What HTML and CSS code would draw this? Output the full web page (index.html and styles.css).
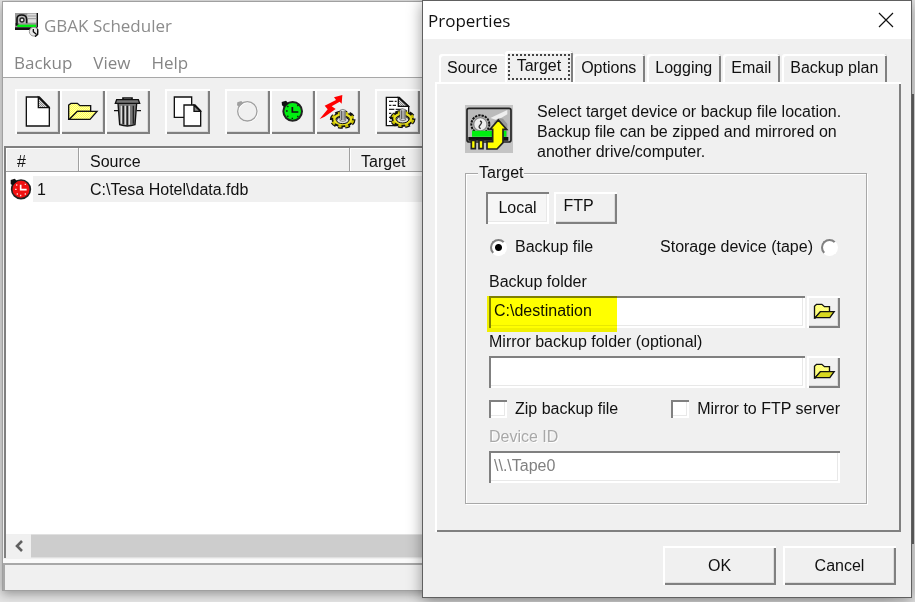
FILE: index.html
```html
<!DOCTYPE html>
<html lang="en">
<head>
<meta charset="utf-8">
<title>GBAK Scheduler</title>
<link rel="stylesheet" href="styles.css">
</head>
<body>
<svg class="defs" aria-hidden="true">
  <defs>
    <pattern id="dither" width="6" height="6" patternUnits="userSpaceOnUse"><rect width="6" height="6" fill="#ffff50"/><path d="M0 0h3v3H0zM3 3h3v3H3z" fill="#ffffa8"/></pattern>
    <pattern id="greyDither" width="6" height="6" patternUnits="userSpaceOnUse"><rect width="6" height="6" fill="#888"/><path d="M0 0h3v3H0zM3 3h3v3H3z" fill="#ddd"/></pattern>
    <symbol id="gear" viewBox="0 0 80 64">
      <ellipse cx="40" cy="36" rx="31" ry="20" fill="none" stroke="#111" stroke-width="15" stroke-dasharray="13 7"/>
      <ellipse cx="40" cy="36" rx="26" ry="16" fill="none" stroke="#111" stroke-width="14"/>
      <ellipse cx="40" cy="36" rx="30" ry="19" fill="none" stroke="#c8c000" stroke-width="10" stroke-dasharray="9 11" stroke-dashoffset="-2"/>
      <ellipse cx="40" cy="35" rx="25" ry="15" fill="none" stroke="#e8e020" stroke-width="7"/>
      <ellipse cx="40" cy="38" rx="18" ry="10" fill="#ddd" stroke="#111" stroke-width="3"/>
      <path d="M32 8q8-5 17 0v31q-8 4-17 0z" fill="#e8e8e8" stroke="#444" stroke-width="2"/>
      <path d="M42 10h5v27h-5z" fill="#888"/>
      <path d="M36 10h3v27h-3z" fill="#222"/>
    </symbol>
    <symbol id="small-folder" viewBox="445 226 96 96">
      <path d="M466 292V257L472 251H488L496 258H511V273H484L468 292Z" fill="url(#dither)" stroke="#111" stroke-width="4"/>
      <path d="M484 273H525L512 291H468Z" fill="#d8d820" stroke="#111" stroke-width="4"/>
    </symbol>
  </defs>
</svg>

<main class="window">
  <header class="window-title">
    <svg class="app-icon" viewBox="45 36 72 72" aria-hidden="true">
      <path d="M45 36h68v50H45z" fill="#999"/><path d="M82 38h28v27H82z" fill="#ddd"/>
      <path d="M84 45h24M84 53h24" stroke="#999" stroke-width="3"/><path d="M110 36h4v42h-4zM47 66h8v8h-8z" fill="#111"/>
      <path d="M51 67V54q0-12 14-12t15 12v13" fill="#bbb" stroke="#111" stroke-width="5"/>
      <circle cx="66" cy="57" r="6" fill="#eee" stroke="#222" stroke-width="4"/>
      <path d="M52 71h56v7H52z" fill="#00ee10"/><path d="M45 79h67v8H45z" fill="#111"/>
      <circle cx="101" cy="92" r="13" fill="#e8e8e8" stroke="#999" stroke-width="3"/><path d="M100 84v8l9 8M113 84v16l-8 7" fill="none" stroke="#111" stroke-width="4"/>
    </svg>
    <h1>GBAK Scheduler</h1>
  </header>
  <nav class="menu">
    <button type="button">Backup</button>
    <button type="button">View</button>
    <button type="button">Help</button>
  </nav>
  <div class="toolbar" role="toolbar" aria-label="Backup tasks">
    <div class="tool-group">
      <button type="button" aria-label="New"><svg viewBox="45 270 135 135"><path d="M79 294H118L148 325V381H79Z" fill="#fff" stroke="#111" stroke-width="4"/><path d="M115 295L147 326H115Z" fill="url(#greyDither)" stroke="#111" stroke-width="4"/></svg></button>
      <button type="button" aria-label="Open"><svg viewBox="180 270 135 135"><path d="M206 361V318L213 313H232L240 320H272V337H232L209 361Z" fill="url(#dither)" stroke="#111" stroke-width="4"/><path d="M232 337H291L270 361H208Z" fill="url(#dither)" stroke="#111" stroke-width="4"/></svg></button>
      <button type="button" aria-label="Delete"><svg viewBox="315 270 135 135"><path d="M369 302V297H396V302" fill="none" stroke="#111" stroke-width="5"/><path d="M354 313H410L405 377Q382 385 359 377Z" fill="#777" stroke="#111" stroke-width="4"/><path d="M364 320v54M376 320v57M388 320v57" stroke="#ddd" stroke-width="4"/><path d="M370 320v56M382 320v58M400 320v54" stroke="#222" stroke-width="4"/><path d="M350 302H415L419 313H346Z" fill="#777" stroke="#111" stroke-width="4"/><path d="M342 335h14M410 335h13" stroke="#111" stroke-width="4"/></svg></button>
    </div>
    <div class="tool-group">
      <button type="button" aria-label="Copy"><svg viewBox="495 270 135 135"><path d="M523 294H575V355H523Z" fill="#fff" stroke="#111" stroke-width="4"/><path d="M552 318H585L602 335V381H552Z" fill="#fff" stroke="#111" stroke-width="4"/><path d="M582 319L601 337H582Z" fill="#888" stroke="#111" stroke-width="4"/></svg></button>
    </div>
    <div class="tool-group">
      <button type="button" aria-label="Disable" disabled><svg viewBox="45 30 135 135"><circle cx="114" cy="99" r="29" fill="none" stroke="#fff" stroke-width="4"/><circle cx="112" cy="97" r="29" fill="none" stroke="#a0a0a0" stroke-width="4"/><path d="M82 70l12-4 6 7-13 10-6-4z" fill="#a0a0a0"/></svg></button>
      <button type="button" aria-label="Enable"><svg viewBox="180 30 135 135"><circle cx="248" cy="97" r="28" fill="#00ee10" stroke="#222" stroke-width="6"/><path d="M215 69l13-4 7 8-13 11-6-5z" fill="#111"/><path d="M247 84v15h18" fill="none" stroke="#111" stroke-width="5"/><path d="M228 96h5M247 116v4M232 81l3 3M262 81l3-3M232 113l3-3M262 111l3 3" stroke="#111" stroke-width="4"/></svg></button>
      <button type="button" aria-label="Run now"><svg viewBox="315 30 135 135"><path d="M329 120L353 91L344 80L378 63L372 55L397 48L395 74L389 68L365 82L377 90L344 113Z" fill="#f00"/><use href="#gear" x="358" y="86" width="80" height="64"/></svg></button>
    </div>
    <div class="tool-group">
      <button type="button" aria-label="Task report"><svg viewBox="495 30 135 135"><path d="M529 55H568L596 82V140H529Z" fill="#fff" stroke="#111" stroke-width="4"/><path d="M565 56V82H595Z" fill="url(#greyDither)" stroke="#111" stroke-width="4"/><path d="M537 67h13m4 0h6M537 79h7m4 0h10M537 91h16m4 0h22M537 103h7m4 0h12M537 115h10M537 127h9" stroke="#222" stroke-width="4"/><use href="#gear" x="538" y="84" width="80" height="64"/></svg></button>
    </div>
  </div>
  <section class="list">
    <table>
      <thead><tr><th class="col-number" scope="col">#</th><th class="col-source" scope="col">Source</th><th scope="col">Target</th></tr></thead>
      <tbody><tr>
        <td class="number"><span><svg class="task-icon" viewBox="30 114 66 66" role="img" aria-label="Scheduled"><circle cx="63" cy="148" r="28" fill="#f01010" stroke="#222" stroke-width="5"/><path d="M32 120l12-4 8 8-15 12-5-4z" fill="#111"/><path d="M62 134v15h18" fill="none" stroke="#fff" stroke-width="5"/><path d="M45 148h5M62 164v5M48 135h4M74 133h4M50 162h4M74 162h4" stroke="#ffd0d0" stroke-width="4"/></svg><b>1</b></span></td>
        <td>C:\Tesa Hotel\data.fdb</td><td></td>
      </tr></tbody>
    </table>
    <div class="scrollbar">
      <button type="button" aria-label="Scroll left"><svg viewBox="0 0 12 12"><path d="M9 1L4 6L9 11" fill="none" stroke="#606060" stroke-width="2.6"/></svg></button>
      <div class="thumb"></div>
    </div>
  </section>
  <footer class="status"></footer>
</main>

<div class="edge"></div>

<section class="dialog" role="dialog" aria-labelledby="dialog-title">
  <header class="dialog-title">
    <h2 id="dialog-title">Properties</h2>
    <button type="button" aria-label="Close"><svg viewBox="0 0 16 16"><path d="M1 1L15 15M15 1L1 15" stroke="#111" stroke-width="1.2"/></svg></button>
  </header>
  <div class="dialog-body">
    <div class="tabs" role="tablist">
      <button type="button" role="tab">Source</button>
      <button type="button" role="tab" class="active" aria-selected="true"><span>Target</span></button>
      <button type="button" role="tab">Options</button>
      <button type="button" role="tab">Logging</button>
      <button type="button" role="tab">Email</button>
      <button type="button" role="tab">Backup plan</button>
    </div>
    <form class="panel" id="target-form" role="tabpanel">
      <div class="intro">
        <svg viewBox="136 316 144 144" aria-hidden="true">
          <path d="M136 316h144v144H136z" fill="#c4c4c4"/>
          <rect x="142" y="326" width="132" height="101" rx="6" fill="#bbb" stroke="#222" stroke-width="5"/>
          <path d="M212 355l51-24v13l-30 18z" fill="#eee"/><path d="M222 369q10-18 28-12l13 16v48h-20z" fill="#999"/>
          <circle cx="182" cy="374" r="27" fill="#bbb" stroke="#111" stroke-width="6" stroke-dasharray="7 3"/>
          <circle cx="182" cy="374" r="20" fill="#eee" stroke="#888" stroke-width="4"/><path d="M181 364q9 3 1 11t1 12" fill="none" stroke="#333" stroke-width="4"/>
          <path d="M157 393h103v18H157z" fill="#00ee10"/><path d="M146 412h120v11H146z" fill="#111"/>
          <path d="M140 430h132v24H140z" fill="#c4c4c4"/>
          <path d="M155 422h12v25h-12zM178 422h12v25h-12zM202 426H219V389H211L236 361L261 389H250V429L232 448H202Z" fill="#ff0" stroke="#222" stroke-width="5"/>
        </svg>
        <p>Select target device or backup file location.<br>Backup file can be zipped and mirrored on<br>another drive/computer.</p>
      </div>
      <fieldset class="group">
        <legend>Target</legend>
        <div class="places">
          <button type="button" class="pressed" aria-pressed="true">Local</button>
          <button type="button" class="ftp">FTP</button>
        </div>
        <div class="kinds">
          <label><input type="radio" name="kind" checked>Backup file</label>
          <label>Storage device (tape)<input type="radio" name="kind"></label>
        </div>
        <label class="caption" for="folder">Backup folder</label>
        <div class="field">
          <div class="marked"><input type="text" id="folder" value="C:\destination"></div>
          <button type="button" aria-label="Browse for backup folder"><svg><use href="#small-folder"/></svg></button>
        </div>
        <label class="caption" for="mirror">Mirror backup folder (optional)</label>
        <div class="field">
          <input type="text" id="mirror">
          <button type="button" aria-label="Browse for mirror folder"><svg><use href="#small-folder"/></svg></button>
        </div>
        <div class="checks">
          <label><input type="checkbox">Zip backup file</label>
          <label><input type="checkbox">Mirror to FTP server</label>
        </div>
        <label class="caption disabled" for="device">Device ID</label>
        <div class="field"><input type="text" id="device" value="\\.\Tape0" disabled></div>
      </fieldset>
    </form>
    <div class="actions">
      <button type="submit" form="target-form">OK</button>
      <button type="button">Cancel</button>
    </div>
  </div>
</section>
</body>
</html>
```
FILE: styles.css
```css
* { box-sizing: border-box; }

:root {
  --face: #f0f0f0;
  --shade: #808080;
  --raised: inset 2px 2px #fff, inset -2px -2px #808080, inset -3px -3px #dcdcdc;
  --sunken: inset 2px 2px #808080, inset -2px -2px #fff, inset -3px -3px #e8e8e8;
}

body {
  margin: 0;
  height: 100vh;
  min-height: 600px;
  position: relative;
  overflow: hidden;
  padding: 1px 24px 11px 2px;
  background: #e4e4e4;
  color: #111;
  font: 16px/20px "Liberation Sans", Arial, sans-serif;
}

button, input { font: inherit; color: inherit; margin: 0; }
button { padding: 0; border: 0; background: var(--face); }
.defs { position: absolute; width: 0; height: 0; }
svg { display: block; }

/* Scheduler window */
.window {
  height: 100%;
  display: flex;
  flex-direction: column;
  border: 1px solid #a0a0a0;
  background: var(--face);
  box-shadow: 0 3px 10px rgba(0, 0, 0, .35);
}
.window-title {
  display: flex;
  align-items: center;
  gap: 5px;
  height: 46px;
  padding-left: 12px;
  background: #fff;
}
.app-icon { width: 24px; height: 24px; }
h1, h2 { margin: 0; padding-top: 1px; font: 17px/24px "Open Sans", sans-serif; }
h1 { color: #8c8c8c; }
.menu {
  display: flex;
  gap: 21px;
  height: 30px;
  padding: 0 11px;
  background: #fff;
  border-bottom: 1px solid #a8a8a8;
}
.menu button {
  background: none;
  color: #858585;
  font: 500 17px/24px "Open Sans", sans-serif;
}
.toolbar {
  display: flex;
  gap: 15px;
  padding: 11px 12px 12px;
}
.tool-group { display: flex; }
.tool-group button { width: 45px; height: 45px; box-shadow: var(--raised); }
.tool-group svg { width: 45px; height: 45px; }

.list {
  flex: 1;
  display: flex;
  flex-direction: column;
  margin-left: 1px;
  border: solid var(--shade);
  border-width: 2px 0 0 2px;
  background: #fff;
}
table { width: 100%; border-collapse: separate; border-spacing: 0; table-layout: fixed; }
th {
  height: 24px;
  padding: 4px 11px 0;
  line-height: 19px;
  text-align: left;
  font-weight: 400;
  background: var(--face);
  border: solid #a0a0a0;
  border-width: 0 1px 1px 0;
  box-shadow: inset 1px 1px #fff;
}
tbody::before { content: ""; display: block; height: 4px; }
td { height: 26px; padding: 2px 11px 0; background: var(--face); }
.col-number { width: 73px; }
.col-source { width: 271px; }
.number { padding: 0; background: linear-gradient(90deg, #fff 27px, var(--face) 27px); }
.number span { display: flex; align-items: center; gap: 5px; padding-left: 4px; }
.number b { padding-top: 2px; font-weight: 400; }
.task-icon { width: 22px; height: 22px; }
.scrollbar { display: flex; height: 24px; margin-top: auto; background: var(--face); }
.scrollbar button { width: 25px; display: grid; place-items: center; }
.scrollbar svg { width: 12px; height: 12px; }
.thumb { flex: 1; background: #cdcdcd; border: solid #e0e0e0; border-width: 1px 0; }
.status {
  height: 27px;
  margin-top: 5px;
  border: solid #a8a8a8;
  border-width: 2px 0 0 2px;
  box-shadow: 0 -4px #fafafa;
}

/* Sliver of the window behind the dialog */
.edge {
  position: absolute;
  inset: 94px 1px 58px auto;
  width: 2px;
  background: #686868;
}

/* Properties dialog */
.dialog {
  position: absolute;
  inset: 0 3px 4px 422px;
  display: flex;
  flex-direction: column;
  border: 1px solid #606060;
  background: var(--face);
  box-shadow: 0 3px 14px rgba(0, 0, 0, .4);
}
.dialog-title {
  display: flex;
  align-items: center;
  justify-content: space-between;
  height: 38px;
  padding: 0 17px 0 5px;
  background: #fff;
}
.dialog-title button { background: none; }
.dialog-title svg { width: 16px; height: 16px; }
.dialog-body {
  flex: 1;
  display: flex;
  flex-direction: column;
  padding: 12px 10px 12px 13px;
}
.tabs { display: flex; align-items: flex-end; padding-left: 3px; }
.tabs button {
  height: 28px;
  padding: 0 9px 0 8px;
  margin-right: 2px;
  white-space: nowrap;
  border-radius: 3px 3px 0 0;
  box-shadow: inset 2px 2px #fff, inset -2px 0 var(--shade);
}
.tabs button:first-child { margin-right: 0; padding-right: 7px; box-shadow: inset 2px 2px #fff; }
.tabs .active { height: 31px; padding: 3px; margin-right: 0; }
.tabs .active span { display: block; height: 26px; padding: 0 7px; line-height: 20px; border: 2px dotted #444; }
.panel {
  flex: 1;
  margin-left: -1px;
  padding: 23px 34px 20px 30px;
  box-shadow: inset 2px 2px #fff, inset -2px -2px var(--shade);
}
.intro { display: flex; gap: 24px; height: 58px; }
.intro svg { flex: none; width: 48px; height: 48px; }
.intro p { margin: -3px 0 0; white-space: nowrap; }
.group {
  margin: 0;
  min-width: 0;
  padding: 9px 26px 16px 20px;
  border: 1px solid #a8a8a8;
  box-shadow: inset 1px 1px #fff, 1px 1px #fff;
}
legend { margin-left: -8px; padding: 0 1px; background: var(--face); }
.places { display: flex; gap: 5px; }
.places button { width: 63px; height: 32px; box-shadow: var(--raised); }
.places .pressed { background: #f6f6f6; box-shadow: var(--sunken); }
.places .ftp { padding: 0 14px 4px 0; }
.kinds, .checks { display: flex; justify-content: space-between; }
.kinds { margin: 13px 2px 15px 4px; }
.kinds label { display: flex; align-items: center; gap: 8px; }
.caption { display: block; padding-left: 3px; }
.disabled { color: #a8a8a8; text-shadow: 1px 1px #fff; }
.field { display: flex; gap: 2px; padding-left: 3px; margin: 4px 0; }
.field button { width: 33px; height: 32px; box-shadow: var(--raised); }
.field svg { width: 33px; height: 32px; }
.field input {
  width: 100%;
  min-width: 0;
  height: 32px;
  flex: 1;
  padding: 0 5px 2px;
  border: 0;
  background: #fff;
  box-shadow: var(--sunken);
}
.field input:disabled { color: #808080; }
.marked { position: relative; flex: 1; }
.marked::after {
  content: "";
  position: absolute;
  inset: 0 auto -4px -2px;
  width: 130px;
  background: #ff0;
  mix-blend-mode: multiply;
  pointer-events: none;
}
.checks { margin: 11px 0 8px; padding-left: 3px; }
.checks label { display: flex; align-items: center; gap: 8px; }
input[type="checkbox"], input[type="radio"] {
  appearance: none;
  flex: none;
  width: 18px;
  height: 18px;
  background: #fff;
  box-shadow: var(--sunken);
}
input[type="radio"] {
  width: 17px;
  height: 17px;
  border-radius: 50%;
  border: 2px solid;
  border-color: #808080 #fff #fff #808080;
  box-shadow: none;
}
input[type="radio"]:checked { background: radial-gradient(circle, #000 3px, #fff 4px); }
.actions { display: flex; justify-content: flex-end; gap: 7px; margin: 14px 5px 0 0; }
.actions button { width: 113px; height: 39px; box-shadow: var(--raised); }
```
